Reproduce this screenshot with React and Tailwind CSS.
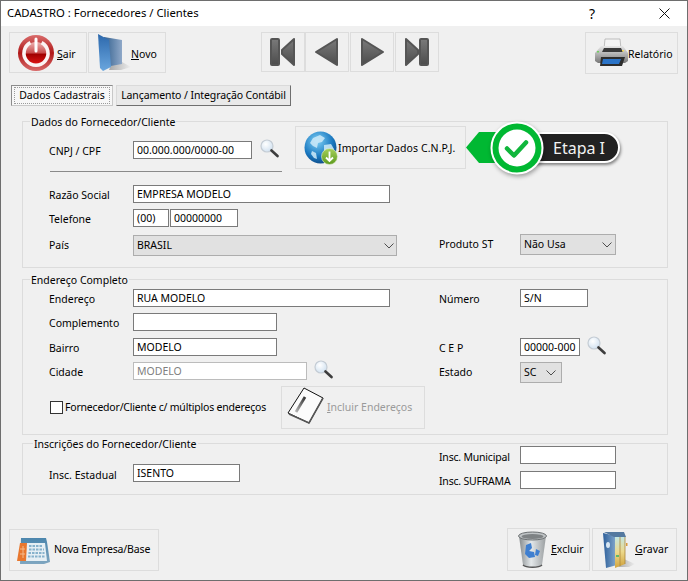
import { Fragment } from "react";

function Power() {
  return (
    <svg width="38" height="38" viewBox="0 0 38 38">
      <defs>
        <linearGradient id="pwrRim" x1="0" y1="0" x2="0" y2="1">
          <stop offset="0" stopColor="#d96c6c" />
          <stop offset="0.5" stopColor="#b01818" />
          <stop offset="1" stopColor="#d86a6a" />
        </linearGradient>
        <linearGradient id="pwrCore" x1="0" y1="0" x2="0" y2="1">
          <stop offset="0" stopColor="#eeb4b4" />
          <stop offset="0.5" stopColor="#c84a4a" />
          <stop offset="0.55" stopColor="#a00000" />
          <stop offset="1" stopColor="#dc1414" />
        </linearGradient>
      </defs>
      <circle cx="19" cy="19" r="18" fill="url(#pwrRim)" />
      <circle cx="19" cy="19" r="11" fill="url(#pwrCore)" />
      <path d="M13.4 8.6A12 12 0 1 0 24.6 8.6" fill="none" stroke="#fbf4f4" strokeWidth="3.6" />
      <path d="M19 5v12" stroke="#fff" strokeWidth="3" strokeLinecap="round" />
    </svg>
  );
}

function BlueFolder() {
  return (
    <svg width="36" height="38" viewBox="0 0 36 38">
      <defs>
        <linearGradient id="nvBack" x1="0" y1="0" x2="1" y2="0">
          <stop offset="0" stopColor="#34618f" />
          <stop offset="1" stopColor="#8fa8c8" />
        </linearGradient>
        <linearGradient id="nvFront" x1="0" y1="0" x2="0" y2="1">
          <stop offset="0" stopColor="#2c68ac" />
          <stop offset="1" stopColor="#6aa6de" />
        </linearGradient>
        <linearGradient id="nvShadow" x1="0" y1="0" x2="1" y2="0">
          <stop offset="0" stopColor="#a8a8a8" />
          <stop offset="1" stopColor="#eeeeee" />
        </linearGradient>
      </defs>
      <path d="M14 31l11-3 9 5-10 3H12z" fill="url(#nvShadow)" />
      <path d="M7 3l18 3v24L8 33z" fill="url(#nvBack)" />
      <path d="M1 0l11 6 2 27-8 4-3-3z" fill="url(#nvFront)" />
    </svg>
  );
}

function Nav({ d }) {
  return (
    <svg width="28" height="30" viewBox="0 0 28 30">
      <defs>
        <linearGradient id="navFill" x1="0" y1="0" x2="0" y2="1">
          <stop offset="0" stopColor="#7a7a7a" />
          <stop offset="1" stopColor="#4c4c4c" />
        </linearGradient>
      </defs>
      <path d={d} fill="url(#navFill)" stroke="#555" strokeWidth="2" strokeLinejoin="round" />
    </svg>
  );
}

function Printer() {
  return (
    <svg width="36" height="30" viewBox="0 0 36 30">
      <defs>
        <linearGradient id="prBody" x1="0" y1="0" x2="0" y2="1">
          <stop offset="0" stopColor="#e8e8e8" />
          <stop offset="1" stopColor="#777777" />
        </linearGradient>
      </defs>
      <path d="M12 1h15l1 10H11z" fill="#f4f4f4" stroke="#a8a8a8" strokeWidth="0.7" />
      <path d="M8 8h22l5 7v8l-3 2H5l-3-2v-8z" fill="url(#prBody)" />
      <path d="M11 10h17l2 4H9z" fill="#3a3a3a" />
      <path d="M8 19h24l-3 9H7z" fill="#2d2d2d" />
      <path d="M10 21h18l-2 5H9z" fill="#2b74c8" />
      <rect x="4" y="13" width="2" height="1.5" fill="#6fcf5f" />
      <rect x="29" y="12" width="2" height="1.5" fill="#efd75a" />
    </svg>
  );
}

function Globe() {
  return (
    <svg width="34" height="34" viewBox="0 0 34 34">
      <defs>
        <radialGradient id="glSea" cx="0.4" cy="0.3" r="0.8">
          <stop offset="0" stopColor="#7fd0f5" />
          <stop offset="0.6" stopColor="#1a78c0" />
          <stop offset="1" stopColor="#0b3f78" />
        </radialGradient>
        <linearGradient id="glBadge" x1="0" y1="0" x2="0" y2="1">
          <stop offset="0" stopColor="#a6d05a" />
          <stop offset="1" stopColor="#5c9a1c" />
        </linearGradient>
      </defs>
      <circle cx="16.5" cy="16.5" r="16" fill="url(#glSea)" />
      <path d="M9 7l7-3 5 3-3 4-4 1-1 5-4-2-3-3zM20 14l7-1 3 5-3 6-4 1-3-5zM8 20l4 2 1 6-3-1-3-4z" fill="#cfeaf8" opacity="0.85" />
      <circle cx="25.5" cy="25.5" r="8" fill="url(#glBadge)" stroke="#e6efd6" strokeWidth="0.6" />
      <path d="M25.5 20.5v9M22 26.5l3.5 3.5 3.5-3.5" fill="none" stroke="#fff" strokeWidth="1.8" />
    </svg>
  );
}

function Lens() {
  return (
    <svg width="19" height="19" viewBox="0 0 19 19">
      <defs>
        <radialGradient id="lensFill" cx="0.4" cy="0.35" r="0.7">
          <stop offset="0" stopColor="#ffffff" />
          <stop offset="1" stopColor="#cfe0f0" />
        </radialGradient>
      </defs>
      <circle cx="7" cy="7" r="6" fill="url(#lensFill)" stroke="#c4ccd4" strokeWidth="1.2" />
      <path d="M11.5 11.5l6 5.5" stroke="#3d3d3d" strokeWidth="2.6" strokeLinecap="round" />
    </svg>
  );
}

function Notebook() {
  return (
    <svg width="40" height="42" viewBox="0 0 40 42">
      <defs>
        <linearGradient id="nbPen" x1="1" y1="0" x2="0" y2="1">
          <stop offset="0" stopColor="#333333" />
          <stop offset="1" stopColor="#b5b5b5" />
        </linearGradient>
      </defs>
      <path d="M17 1l19 10-14 25L1 26z" fill="#fbfbfb" stroke="#111" strokeWidth="1" strokeLinejoin="round" />
      <path d="M2 27l20 9 14-25" fill="none" stroke="#555" strokeWidth="1.6" />
      <path d="M18 10L9 25" stroke="url(#nbPen)" strokeWidth="2.8" />
    </svg>
  );
}

function Calendar() {
  return (
    <svg width="34" height="30" viewBox="0 0 34 30">
      <defs>
        <linearGradient id="calBack" x1="0" y1="0" x2="0" y2="1">
          <stop offset="0" stopColor="#4c86ad" />
          <stop offset="1" stopColor="#7fa6c0" />
        </linearGradient>
      </defs>
      <path d="M4 3h25l1 4 3 20-6 2H3z" fill="url(#calBack)" />
      <path d="M3 8h25l2 18H0z" fill="#e6eff4" />
      <path d="M3 8h7l-1 18H0z" fill="#e8772e" />
      <path d="M12 11h14M12 14.5h15M11.5 18h16M11 21.5h17" stroke="#87b2cc" strokeWidth="1.8" strokeDasharray="2.5 1" />
      <path d="M6 11v12M3 14h5M3 19h5" stroke="#f4bb8c" strokeWidth="1" />
    </svg>
  );
}

function Trash() {
  return (
    <svg width="31" height="38" viewBox="0 0 31 38">
      <defs>
        <linearGradient id="tsBody" x1="0" y1="0" x2="1" y2="0">
          <stop offset="0" stopColor="#858a8c" />
          <stop offset="0.45" stopColor="#e4e8ea" />
          <stop offset="1" stopColor="#9a9ea0" />
        </linearGradient>
      </defs>
      <path d="M2 5l4 29c2 3 17 3 19 0l4-29z" fill="url(#tsBody)" />
      <ellipse cx="15.5" cy="5" rx="14" ry="4" fill="#c0c4c6" stroke="#6a6e70" strokeWidth="1" />
      <ellipse cx="15.5" cy="5.5" rx="11" ry="2.4" fill="#7e8284" />
      <path d="M9 14l5-2 1 5-3 3 5 1 1 5-6 1-4-4zM19 18l4 2-2 5-3-1z" fill="#3f7fd0" />
      <path d="M6 34c3 3 16 3 19 0" fill="none" stroke="#555" strokeWidth="1.5" />
    </svg>
  );
}

function SaveFolder() {
  return (
    <svg width="34" height="38" viewBox="0 0 34 38">
      <defs>
        <linearGradient id="svBlue" x1="0" y1="0" x2="1" y2="0">
          <stop offset="0" stopColor="#2d5f9a" />
          <stop offset="1" stopColor="#89add0" />
        </linearGradient>
        <linearGradient id="svGold" x1="0" y1="0" x2="0" y2="1">
          <stop offset="0" stopColor="#c4e6e2" />
          <stop offset="0.5" stopColor="#ecd98c" />
          <stop offset="1" stopColor="#d2a642" />
        </linearGradient>
        <linearGradient id="svShadow" x1="0" y1="0" x2="1" y2="0">
          <stop offset="0" stopColor="#a8a8a8" />
          <stop offset="1" stopColor="#eeeeee" />
        </linearGradient>
      </defs>
      <path d="M22 28l11 5-6 3H16z" fill="url(#svShadow)" />
      <path d="M1 2l13 3 1 29-11 3z" fill="url(#svBlue)" />
      <path d="M2 1h20l2 5H12z" fill="#54799f" />
      <path d="M13 6h5v29l-5 2z" fill="url(#svGold)" />
      <path d="M18 6h5v27l-5 2z" fill="url(#svGold)" />
      <path d="M18 6v29M23 6v27" stroke="#a9873a" strokeWidth="0.8" />
      <rect x="14" y="24" width="3" height="2" fill="#62b86a" />
      <rect x="24" y="12" width="1.5" height="3" fill="#d99a3a" />
      <ellipse cx="6" cy="14" rx="2" ry="3" fill="#d7e6f3" />
    </svg>
  );
}

function Chevron() {
  return (
    <svg width="10" height="6" viewBox="0 0 10 6" className="shrink-0">
      <path d="M0.5 0.5L5 5l4.5-4.5" fill="none" stroke="#4d4d4d" strokeWidth="1" />
    </svg>
  );
}

function ToolButton({ className, children }) {
  return (
    <div className={`flex shrink-0 items-center border border-[#dddddd] text-black ${className}`}>
      {children}
    </div>
  );
}

function Input({ w, value, disabled }) {
  return (
    <div
      className={`flex h-[18px] shrink-0 items-center border bg-white pl-[3px] leading-none ${w} ${
        disabled ? "border-[#bcbcbc] text-[#7f7f7f]" : "border-[#7a7a7a] text-black"
      }`}
    >
      {value}
    </div>
  );
}

function Select({ className, value, chevron }) {
  return (
    <div className={`flex h-[21px] shrink-0 items-center justify-between border border-[#adadad] bg-[#e1e1e1] pl-[3px] text-black ${className}`}>
      <span>{value}</span>
      <span className={chevron}>
        <Chevron />
      </span>
    </div>
  );
}

function Group({ title, titleClass, className, children }) {
  return (
    <div className={`relative ml-[21px] w-[646px] border border-[#dcdcdc] pl-[26px] ${className}`}>
      <span className={`absolute -top-[7px] bg-[#f0f0f0] px-[1px] leading-[14px] text-black ${titleClass}`}>
        {title}
      </span>
      {children}
    </div>
  );
}

function Row({ className = "", left, right }) {
  return (
    <div className={`flex items-start ${className}`}>
      <div className="flex w-[390px] shrink-0 items-start">{left}</div>
      <div className="flex flex-1 items-start">{right}</div>
    </div>
  );
}

function Label({ w, pad = "pt-[4px]", children }) {
  return <span className={`flex h-[18px] shrink-0 items-center text-black ${w} ${pad}`}>{children}</span>;
}

function Callout() {
  return (
    <div className="absolute left-[465px] top-[119px] h-[56px] w-[156px]">
      <div className="absolute left-[66px] top-[12px] flex h-[31px] w-[88px] items-center rounded-r-full border-2 border-white bg-[#222222] pl-[19px] text-[16px] leading-none text-[#f2f2f2] shadow-[1px_2px_3px_rgba(0,0,0,0.45)] [font-family:'Liberation_Sans',sans-serif]">
        Etapa I
      </div>
      <svg width="60" height="56" viewBox="0 0 60 56" className="absolute left-0 top-0 overflow-visible">
        <path d="M0 27.5L13 12h25v31H13z" fill="#00b832" />
        <circle cx="51" cy="28" r="25.5" fill="#00b832" stroke="#ffffff" strokeWidth="2" className="drop-shadow-[1px_2px_2px_rgba(0,0,0,0.35)]" />
        <circle cx="51" cy="28" r="18.5" fill="#ffffff" />
        <path d="M41 28.5l7 7 12-13" fill="none" stroke="#10b63c" strokeWidth="4.5" strokeLinecap="round" strokeLinejoin="round" />
      </svg>
    </div>
  );
}

export default function App() {
  const navs = [
    "M3 2h6a1 1 0 0 1 1 1v24a1 1 0 0 1-1 1H3a1 1 0 0 1-1-1V3a1 1 0 0 1 1-1zM25 2v26L13 17v-4z",
    "M3 15L24 2v26z",
    "M4 2l21 13L4 28z",
    "M3 2l12 11v4L3 28zM18 2h6a1 1 0 0 1 1 1v24a1 1 0 0 1-1 1h-6a1 1 0 0 1-1-1V3a1 1 0 0 1 1-1z",
  ];

  return (
    <div className="relative flex h-[581px] w-[688px] flex-col overflow-hidden whitespace-nowrap border border-[#6e6e6e] bg-[#f0f0f0] text-[10.5px] [font-family:'DejaVu_Sans_Condensed','Liberation_Sans',sans-serif]">
      <div className="flex h-[25px] shrink-0 items-center bg-white pl-[6px] text-[11.3px] text-black [font-family:'Noto_Sans',sans-serif]">
        <span>CADASTRO : Fornecedores / Clientes</span>
        <span className="ml-auto mr-[64px] text-[14px] leading-none">?</span>
        <svg width="11" height="11" viewBox="0 0 11 11" className="mr-[17px]">
          <path d="M0.5 0.5l10 10M10.5 0.5l-10 10" stroke="#111" strokeWidth="1" />
        </svg>
      </div>

      <div className="mt-[6px] flex h-[41px] shrink-0 items-start pl-[8px]">
        <ToolButton className="h-[41px] w-[78px] pl-[7px]">
          <Power />
          <span className="ml-[2px] pt-[4px]"><u>S</u>air</span>
        </ToolButton>
        <ToolButton className="ml-[1px] h-[41px] w-[78px] pl-[8px]">
          <BlueFolder />
          <span className="ml-[-2px] pt-[4px]"><u>N</u>ovo</span>
        </ToolButton>
        <div className="ml-[95px] flex">
          {navs.map((d, i) => (
            <Fragment key={i}>
              <ToolButton className={`h-[40px] w-[44px] justify-center ${i === 2 || i === 3 ? "ml-[1px]" : ""}`}>
                <Nav d={d} />
              </ToolButton>
            </Fragment>
          ))}
        </div>
        <ToolButton className="ml-auto mr-[9px] h-[42px] w-[93px] pl-[7px]">
          <Printer />
          <span className="ml-[-1px] pt-[4px]">Relatório</span>
        </ToolButton>
      </div>

      <div className="mt-[12px] flex h-[21px] shrink-0 items-start pl-[10px]">
        <div className="flex h-[21px] w-[102px] items-center justify-center border border-[#8c8c8c] border-b-[#c8c8c8] border-r-[#c8c8c8] bg-[#f7f7f7] text-black">
          <span className="flex h-[17px] w-[96px] items-center justify-center border border-dotted border-[#9a9a9a]">Dados Cadastrais</span>
        </div>
        <div className="ml-[3px] flex h-[21px] w-[175px] items-center justify-center border border-[#dadada] border-b-[#6f6f6f] border-r-[#6f6f6f] bg-[#e9e9e9] tracking-[-0.1px] text-black">
          Lançamento / Integração Contábil
        </div>
      </div>

      <Group title="Dados do Fornecedor/Cliente" titleClass="left-[7px]" className="mt-[15px] h-[147px] shrink-0 pt-[4px]">
        <div className="flex items-start">
          <div className="w-[233px] shrink-0 pt-[15px]">
            <div className="flex items-start">
              <Label w="w-[84px]">CNPJ / CPF</Label>
              <Input w="w-[119px]" value="00.000.000/0000-00" />
              <span className="ml-[8px] -mt-[2px]"><Lens /></span>
            </div>
            <div className="mt-[12px] ml-[1px] h-px w-[232px] bg-[#8a8a8a]" />
          </div>
          <div className="ml-[13px] flex h-[43px] w-[171px] shrink-0 items-center border border-[#dddddd] pl-[8px]">
            <Globe />
            <span className="pt-[3px] tracking-[0.1px] text-black">Importar Dados C.N.P.J.</span>
          </div>
        </div>
        <div className="mt-[13px] flex items-start">
          <Label w="w-[84px]">Razão Social</Label>
          <Input w="w-[257px]" value="EMPRESA MODELO" />
        </div>
        <div className="mt-[6px] flex items-start">
          <Label w="w-[84px]">Telefone</Label>
          <Input w="w-[36px]" value="(00)" />
          <span className="ml-[1px]"><Input w="w-[68px]" value="00000000" /></span>
        </div>
        <Row
          className="mt-[7px]"
          left={
            <>
              <Label w="w-[84px]" pad="pt-[5px]">País</Label>
              <span className="mt-[1px]">
                <Select className="w-[264px]" value="BRASIL" chevron="mr-[2px]" />
              </span>
            </>
          }
          right={
            <>
              <Label w="w-[81px]">Produto ST</Label>
              <Select className="w-[96px]" value="Não Usa" chevron="mr-[3px]" />
            </>
          }
        />
      </Group>

      <Group title="Endereço Completo" titleClass="left-[7px]" className="mt-[11px] h-[156px] shrink-0 pt-[9px]">
        <Row
          left={
            <>
              <Label w="w-[84px]">Endereço</Label>
              <Input w="w-[257px]" value="RUA MODELO" />
            </>
          }
          right={
            <>
              <Label w="w-[81px]">Número</Label>
              <Input w="w-[68px]" value="S/N" />
            </>
          }
        />
        <div className="mt-[6px] flex items-start">
          <Label w="w-[84px]">Complemento</Label>
          <Input w="w-[144px]" value="" />
        </div>
        <Row
          className="mt-[7px]"
          left={
            <>
              <Label w="w-[84px]">Bairro</Label>
              <Input w="w-[144px]" value="MODELO" />
            </>
          }
          right={
            <>
              <Label w="w-[81px]">C E P</Label>
              <Input w="w-[60px]" value="00000-000" />
              <span className="ml-[7px] -mt-[2px]"><Lens /></span>
            </>
          }
        />
        <Row
          className="mt-[6px]"
          left={
            <>
              <Label w="w-[84px]">Cidade</Label>
              <Input w="w-[174px]" value="MODELO" disabled />
              <span className="ml-[7px] -mt-[2px]"><Lens /></span>
            </>
          }
          right={
            <>
              <Label w="w-[81px]">Estado</Label>
              <Select className="w-[42px]" value="SC" chevron="mr-[5px]" />
            </>
          }
        />
        <div className="mt-[3px] flex items-center">
          <div className="flex w-[232px] shrink-0 items-center text-black">
            <span className="ml-[1px] h-[13px] w-[13px] border border-[#333333] bg-white" />
            <span className="ml-[2px] tracking-[-0.2px]">Fornecedor/Cliente c/ múltiplos endereços</span>
          </div>
          <div className="flex h-[43px] w-[144px] shrink-0 items-center border border-[#dddddd] pl-[5px] text-[#9a9a9a]">
            <Notebook />
            <span><u>I</u>ncluir Endereços</span>
          </div>
        </div>
      </Group>

      <Group title="Inscrições do Fornecedor/Cliente" titleClass="left-[10px]" className="mt-[8px] h-[52px] shrink-0">
        <Row
          left={
            <div className="flex pt-[20px]">
              <Label w="w-[84px]" pad="pt-[5px]">Insc. Estadual</Label>
              <Input w="w-[107px]" value="ISENTO" />
            </div>
          }
          right={
            <div className="pt-[2px]">
              <div className="flex">
                <Label w="w-[81px] tracking-[-0.2px]" pad="pt-[5px]">Insc. Municipal</Label>
                <Input w="w-[96px]" value="" />
              </div>
              <div className="mt-[7px] flex">
                <Label w="w-[81px] tracking-[-0.2px]">Insc. SUFRAMA</Label>
                <Input w="w-[96px]" value="" />
              </div>
            </div>
          }
        />
      </Group>

      <div className="mt-auto mb-[9px] flex items-end pl-[8px]">
        <ToolButton className="h-[42px] w-[150px] pl-[7px]">
          <Calendar />
          <span className="ml-[3px] tracking-[-0.15px]">Nova Empresa/Base</span>
        </ToolButton>
        <ToolButton className="ml-auto h-[43px] w-[83px] pl-[9px]">
          <Trash />
          <span className="ml-[3px]"><u>E</u>xcluir</span>
        </ToolButton>
        <ToolButton className="ml-[2px] mr-[10px] h-[43px] w-[85px] pl-[9px]">
          <SaveFolder />
          <span className="ml-[-1px]"><u>G</u>ravar</span>
        </ToolButton>
      </div>

      <Callout />
    </div>
  );
}
